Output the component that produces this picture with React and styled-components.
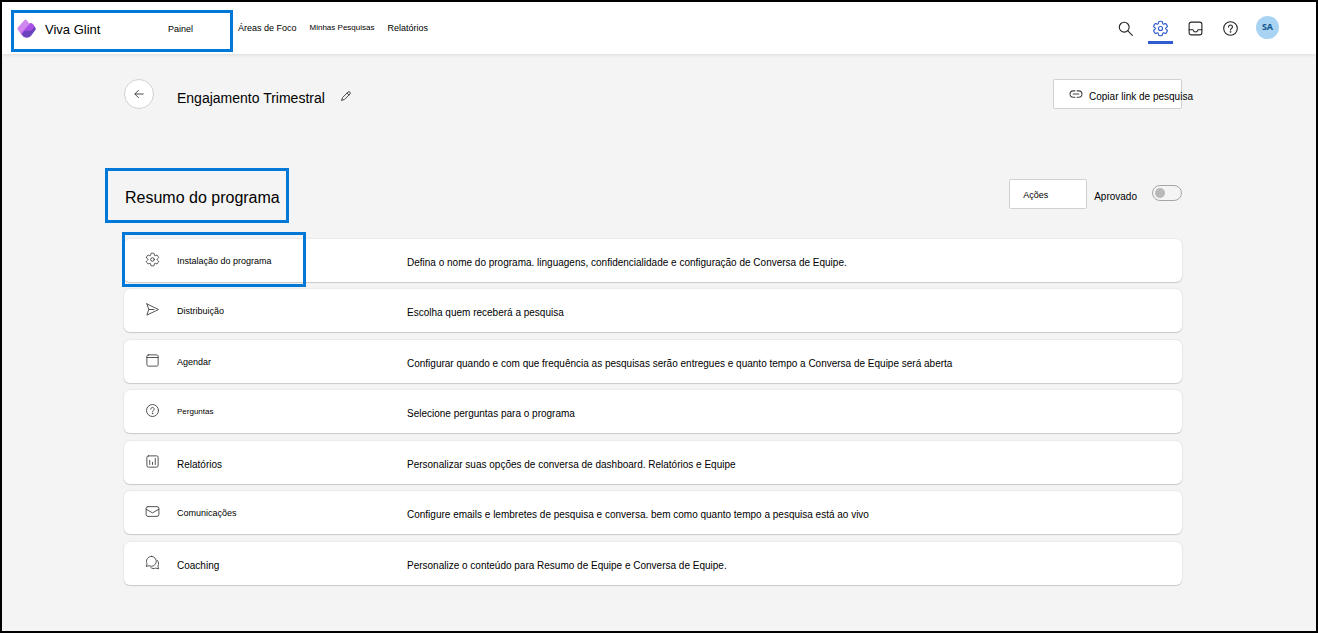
import { useState } from "react";
import styled, { createGlobalStyle, css } from "styled-components";

const GlobalStyle = createGlobalStyle`
  *,
  *::before,
  *::after {
    box-sizing: border-box;
  }

  body {
    margin: 0;
    background-color: #f4f4f4;
    color: #000;
    font-family: "Liberation Sans", Arial, sans-serif;
    font-size: 10px;
    line-height: 14px;
  }

  button,
  input {
    font: inherit;
    color: inherit;
  }
`;

const Frame = styled.div`
  min-height: 100vh;
  border: 2px solid #000;
`;

const highlight = css`
  border: 3px solid #0078d7;
`;

const Header = styled.header`
  display: flex;
  align-items: center;
  justify-content: space-between;
  height: 52px;
  padding: 0 37px 0 9px;
  background-color: #fff;
  box-shadow: 0 1px 4px rgba(0, 0, 0, 0.1);
`;

const Nav = styled.nav`
  display: flex;
  align-items: center;
`;

const BrandGroup = styled.div`
  ${highlight}
  display: flex;
  align-items: center;
  justify-content: space-between;
  width: 222px;
  height: 42px;
  margin: 6px 5px 0 0;
  padding: 0 37px 5px 3px;
`;

const Brand = styled.a`
  display: flex;
  align-items: center;
  gap: 8px;
  font-size: 13px;
  color: inherit;
  text-decoration: none;
  white-space: nowrap;

  span {
    padding-top: 2px;
  }
`;

const NavLink = styled.a`
  font-size: ${({ $small }) => ($small ? "8px" : "9px")};
  color: inherit;
  text-decoration: none;
  white-space: nowrap;
`;

const NavLinks = styled.div`
  display: flex;
  align-items: center;
  gap: 13px;
`;

const Tools = styled.div`
  display: flex;
  align-items: center;
  gap: 10px;
`;

const ToolButton = styled.button`
  display: grid;
  place-items: center;
  width: 25px;
  height: 32px;
  padding: 0;
  border: 0 solid transparent;
  border-width: 3px 0;
  border-bottom-color: ${({ $active }) => ($active ? "#2f5bd0" : "transparent")};
  background: none;
  color: ${({ $active }) => ($active ? "#2f5bd0" : "#242424")};
  cursor: pointer;
`;

const Avatar = styled.button`
  width: 23px;
  height: 23px;
  margin: 0 0 2px 3px;
  padding: 0;
  border: 0;
  border-radius: 50%;
  background-color: #a9d3f2;
  color: #0f548c;
  font-family: "Open Sans", sans-serif;
  font-size: 9px;
  font-weight: 700;
  cursor: pointer;
`;

const Main = styled.main`
  padding: 25px 134px 40px 122px;
`;

const Bar = styled.div`
  display: flex;
  align-items: center;
  justify-content: space-between;
  height: 30px;
`;

const BarGroup = styled.div`
  display: flex;
  align-items: center;
`;

const BackButton = styled.button`
  display: grid;
  place-items: center;
  width: 30px;
  height: 30px;
  margin-right: 23px;
  padding: 0;
  border: 1px solid #d1d1d1;
  border-radius: 50%;
  background-color: #fff;
  color: #424242;
  cursor: pointer;
`;

const ProgramName = styled.h1`
  margin: 0;
  padding-top: 8px;
  font-size: 14px;
  font-weight: 400;
  line-height: 16px;
`;

const EditButton = styled.button`
  display: grid;
  margin-left: 15px;
  padding: 4px 0 0;
  border: 0;
  background: none;
  color: #424242;
  cursor: pointer;
`;

const OutlineButton = styled.button`
  display: flex;
  align-items: center;
  gap: 6px;
  width: ${({ $wide }) => ($wide ? "129px" : "78px")};
  height: 30px;
  padding: 0 0 0 ${({ $wide }) => ($wide ? "15px" : "13px")};
  border: 1px solid #d1d1d1;
  border-radius: 2px;
  background-color: #fff;
  font-size: ${({ $wide }) => ($wide ? "10px" : "9px")};
  white-space: nowrap;
  cursor: pointer;

  svg {
    flex: none;
    color: #424242;
  }

  span {
    padding-top: ${({ $wide }) => ($wide ? "6px" : "2px")};
  }
`;

const SummaryBar = styled(Bar)`
  margin-top: 70px;
`;

const SummaryTitle = styled.h2`
  position: relative;
  margin: 0;
  padding: 7px 0 0 1px;
  font-size: 16px;
  font-weight: 400;
  line-height: 20px;

  &::after {
    ${highlight}
    content: "";
    position: absolute;
    inset: -13px -9px -15px -19px;
  }
`;

const ToggleLabel = styled.label`
  display: flex;
  align-items: center;
  gap: 15px;
  margin-left: 7px;

  span {
    padding-top: 6px;
  }
`;

const Toggle = styled.input`
  appearance: none;
  display: flex;
  align-items: center;
  width: 30px;
  height: 16px;
  margin: 0 0 2px;
  padding: 0 2px;
  border: 1px solid #a6a6a6;
  border-radius: 8px;
  cursor: pointer;

  &::before {
    content: "";
    width: 10px;
    height: 10px;
    border-radius: 50%;
    background-color: #b8b8b8;
  }

  &:checked {
    justify-content: flex-end;
  }
`;

const StepList = styled.ul`
  display: flex;
  flex-direction: column;
  gap: 7px;
  margin: 30px 0 0;
  padding: 0;
  list-style: none;
`;

const StepItem = styled.li`
  position: relative;

  &:nth-child(even) {
    margin-bottom: 1px;
  }

  ${({ $highlighted }) =>
    $highlighted &&
    css`
      &::after {
        ${highlight}
        content: "";
        position: absolute;
        inset: -7px auto -5px -2px;
        width: 184px;
      }
    `}
`;

const StepLink = styled.a`
  display: grid;
  grid-template-columns: 32px 230px 1fr;
  align-items: center;
  min-height: 43px;
  padding-left: 21px;
  border-radius: 6px;
  background-color: #fff;
  box-shadow: 0 0 2px rgba(0, 0, 0, 0.14), 0 1px 1px rgba(0, 0, 0, 0.14);
  color: inherit;
  text-decoration: none;

  svg {
    margin-bottom: 2px;
    color: #424242;
  }
`;

const StepName = styled.span`
  padding-top: ${({ $size }) => ($size > 9 ? "4px" : "0")};
  font-size: ${({ $size }) => $size}px;
`;

const StepText = styled.span`
  padding-top: 4px;
`;

const icons = {
  search: (
    <>
      <circle cx="8.5" cy="8.5" r="5.8" />
      <path d="m12.8 12.8 5.2 5.2" />
    </>
  ),
  gear: (
    <>
      <path d="M1.91 7.38A8.5 8.5 0 0 1 3.7 4.3a.5.5 0 0 1 .54-.13l1.92.68a1 1 0 0 0 1.32-.76l.36-2a.5.5 0 0 1 .4-.4 8.53 8.53 0 0 1 3.55 0c.2.04.35.2.38.4l.37 2a1 1 0 0 0 1.32.76l1.92-.68a.5.5 0 0 1 .54.13 8.5 8.5 0 0 1 1.78 3.08c.06.2 0 .4-.15.54l-1.56 1.32a1 1 0 0 0 0 1.52l1.56 1.32a.5.5 0 0 1 .15.54 8.5 8.5 0 0 1-1.78 3.08.5.5 0 0 1-.54.13l-1.92-.68a1 1 0 0 0-1.32.76l-.37 2a.5.5 0 0 1-.38.4 8.53 8.53 0 0 1-3.56 0 .5.5 0 0 1-.39-.4l-.36-2a1 1 0 0 0-1.32-.76l-1.92.68a.5.5 0 0 1-.54-.13 8.5 8.5 0 0 1-1.78-3.08.5.5 0 0 1 .15-.54l1.56-1.32a1 1 0 0 0 0-1.52L2.06 7.92a.5.5 0 0 1-.15-.54Z" />
      <circle cx="10" cy="10" r="2.4" />
    </>
  ),
  inbox: (
    <>
      <rect x="2.5" y="2.5" width="15" height="15" rx="2.5" />
      <path d="M2.5 11.5h4.6c.3 1.7 1.4 2.6 2.9 2.6s2.6-.9 2.9-2.6h4.6" />
    </>
  ),
  help: (
    <>
      <circle cx="10" cy="10" r="8" />
      <path d="M7.7 8.2c0-1.4 1-2.3 2.3-2.3s2.3.9 2.3 2.2c0 1.7-2.3 1.9-2.3 3.7" />
      <circle cx="10" cy="13.9" r=".4" />
    </>
  ),
  back: <path d="M17 10H3.5M9 4l-6 6 6 6" />,
  pencil: (
    <path d="m3 17 1.100-4.300L13.300 3.500a2.200 2.200 0 0 1 3.200 3.200L7.300 15.900 3 17ZM11.700 5.100l3.200 3.200" />
  ),
  link: (
    <path d="M8.5 5.5H6a4.500 4.500 0 0 0 0 9h2.500M11.500 5.500H14a4.500 4.500 0 0 1 0 9h-2.500M6 10h8" />
  ),
  send: <path d="M2.5 2.5 18 10 2.5 17.5 5 10 2.5 2.5ZM5 10h7" />,
  calendar: (
    <>
      <rect x="2.5" y="2.5" width="15" height="15" rx="2" />
      <path d="M2.5 6h15" />
    </>
  ),
  chart: (
    <>
      <rect x="2.5" y="2.5" width="15" height="15" rx="2" />
      <path d="M6.3 8.5V14M10 11v3M13.7 6v8" />
    </>
  ),
  mail: (
    <>
      <rect x="1.5" y="3.5" width="17" height="13" rx="2.5" />
      <path d="m1.5 7 8.5 4.8L18.5 7" />
    </>
  ),
  chat: (
    <>
      <path d="M8.500 1.800a6.600 6.600 0 1 1-3 12.500l-3.700.9.900-3.600a6.600 6.600 0 0 1 5.800-9.800Z" />
      <path d="M7.700 16.800c1.300 1.100 4.300 1.900 6.600.7l3.900.9-1-3.700c1.500-2.600 1-5.700-.8-7.600" />
    </>
  ),
};

function Icon({ name, size = 16, weight = 1.3 }) {
  return (
    <svg
      width={size}
      height={size}
      viewBox="0 0 20 20"
      fill="none"
      stroke="currentColor"
      strokeWidth={weight}
      strokeLinecap="round"
      strokeLinejoin="round"
      aria-hidden="true"
    >
      {icons[name]}
    </svg>
  );
}

function Logo() {
  return (
    <svg width="20" height="20" viewBox="0 0 20 20" aria-hidden="true">
      <path
        d="M16.800 6.500l1.600 2.300q.8 1.200 0 2.300l-4.500 5.800q-1.500 1.800-4 1.800-3.300 0-5.400-3.500L8 9.500Z"
        fill="#6b43be"
      />
      <path
        d="M11.500 5.500q2-2.300 4-.8 1.200 1 1.800 2.400-.5 2.600-2.500 4-1 .7-3 .7H9q-3 .2-4.100 4.200L3 13.500Z"
        fill="#a850e6"
      />
      <path
        d="M7.600 1q1-.9 1.900.1L12.700 5 5.500 12.500q-1.300 1.500-.9 3.200L.8 10.700q-.8-1.200.2-2.500Z"
        fill="#cf87ee"
      />
    </svg>
  );
}

const tools = [
  { icon: "search", label: "Pesquisar", size: 17 },
  { icon: "gear", label: "Configurações", size: 17, active: true },
  { icon: "inbox", label: "Caixa de entrada", size: 17 },
  { icon: "help", label: "Ajuda", size: 17 },
];

const steps = [
  {
    icon: "gear",
    name: "Instalação do programa",
    size: 9,
    text: "Defina o nome do programa. linguagens, confidencialidade e configuração de Conversa de Equipe.",
    highlighted: true,
  },
  {
    icon: "send",
    name: "Distribuição",
    size: 9,
    text: "Escolha quem receberá a pesquisa",
  },
  {
    icon: "calendar",
    name: "Agendar",
    size: 9,
    text: "Configurar quando e com que frequência as pesquisas serão entregues e quanto tempo a Conversa de Equipe será aberta",
  },
  {
    icon: "help",
    name: "Perguntas",
    size: 8,
    text: "Selecione perguntas para o programa",
  },
  {
    icon: "chart",
    name: "Relatórios",
    size: 10,
    text: "Personalizar suas opções de conversa de dashboard. Relatórios e Equipe",
  },
  {
    icon: "mail",
    name: "Comunicações",
    size: 9,
    text: "Configure emails e lembretes de pesquisa e conversa. bem como quanto tempo a pesquisa está ao vivo",
  },
  {
    icon: "chat",
    name: "Coaching",
    size: 10,
    text: "Personalize o conteúdo para Resumo de Equipe e Conversa de Equipe.",
  },
];

function Step({ step }) {
  const { icon, name, size, text, highlighted } = step;

  return (
    <StepItem $highlighted={highlighted}>
      <StepLink href="#">
        <Icon name={icon} size={15} weight={1.2} />
        <StepName $size={size}>{name}</StepName>
        <StepText>{text}</StepText>
      </StepLink>
    </StepItem>
  );
}

function App() {
  const [approved, setApproved] = useState(false);

  return (
    <>
      <GlobalStyle />
      <Frame>
        <Header>
          <Nav>
            <BrandGroup>
              <Brand href="#">
                <Logo />
                <span>Viva Glint</span>
              </Brand>
              <NavLink href="#">Painel</NavLink>
            </BrandGroup>
            <NavLinks>
              <NavLink href="#">Áreas de Foco</NavLink>
              <NavLink href="#" $small>
                Minhas Pesquisas
              </NavLink>
              <NavLink href="#">Relatórios</NavLink>
            </NavLinks>
          </Nav>
          <Tools>
            {tools.map(({ icon, label, size, active }) => (
              <ToolButton key={icon} aria-label={label} $active={active}>
                <Icon name={icon} size={size} />
              </ToolButton>
            ))}
            <Avatar>SA</Avatar>
          </Tools>
        </Header>

        <Main>
          <Bar>
            <BarGroup>
              <BackButton aria-label="Voltar">
                <Icon name="back" size={12} weight={1.6} />
              </BackButton>
              <ProgramName>Engajamento Trimestral</ProgramName>
              <EditButton aria-label="Editar nome">
                <Icon name="pencil" size={12} weight={1.6} />
              </EditButton>
            </BarGroup>
            <OutlineButton $wide>
              <Icon name="link" size={14} weight={1.5} />
              <span>Copiar link de pesquisa</span>
            </OutlineButton>
          </Bar>

          <SummaryBar>
            <SummaryTitle>Resumo do programa</SummaryTitle>
            <BarGroup>
              <OutlineButton>
                <span>Ações</span>
              </OutlineButton>
              <ToggleLabel>
                <span>Aprovado</span>
                <Toggle
                  type="checkbox"
                  role="switch"
                  checked={approved}
                  onChange={(e) => setApproved(e.target.checked)}
                />
              </ToggleLabel>
            </BarGroup>
          </SummaryBar>

          <StepList>
            {steps.map((step) => (
              <Step key={step.name} step={step} />
            ))}
          </StepList>
        </Main>
      </Frame>
    </>
  );
}

export default App;
